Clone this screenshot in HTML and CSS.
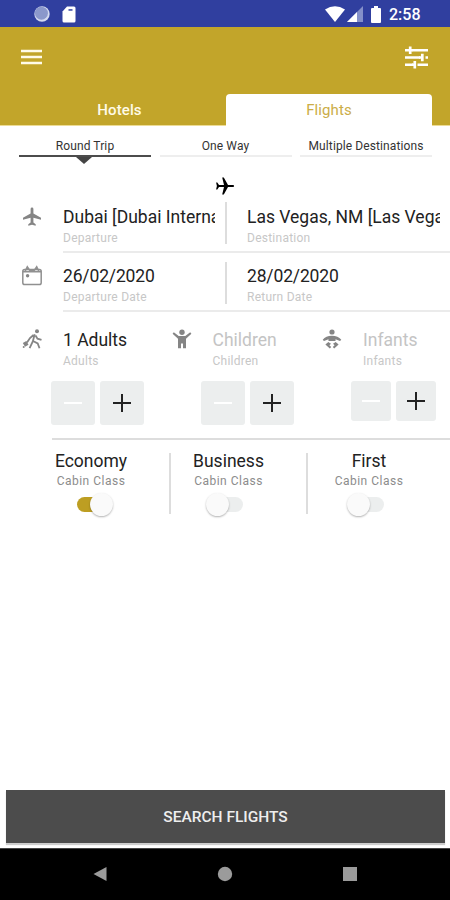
FILE: index.html
```html
<!DOCTYPE html>
<html lang="en">
<head>
<meta charset="utf-8">
<title>Flight search</title>
<link rel="stylesheet" href="styles.css">
</head>
<body>
<div class="screen">
  <div class="status">
    <svg class="status-dot" viewBox="0 0 16 16"><circle cx="8" cy="8" r="7.7" fill="#d4daf0"/><circle cx="7.4" cy="7.2" r="6.5" fill="#8b98cb"/></svg>
    <svg class="status-card" viewBox="0 0 14 17"><path d="M5 0.5h7a1.5 1.5 0 0 1 1.5 1.5v13a1.5 1.5 0 0 1-1.5 1.5H2A1.5 1.5 0 0 1 .5 15V5.5z" fill="#fff"/><path d="M6.5 3.2h4v1.5h-4z" fill="#303f9f"/></svg>
    <span class="grow"></span>
    <svg class="status-wifi" viewBox="0 0 20 16"><path d="M0 3.4Q10-3 20 3.4L10 16z" fill="#fff"/></svg>
    <svg class="status-signal" viewBox="0 0 16 16"><path d="M0 16L16 0v16z" fill="#8490c9"/><path d="M0 16L10 6v10z" fill="#fff"/></svg>
    <svg class="status-battery" viewBox="0 0 10 17"><path d="M3 0h4v2h2q1 0 1 1v13q0 1-1 1H1q-1 0-1-1V3q0-1 1-1h2z" fill="#fff"/></svg>
    <span class="clock">2:58</span>
  </div>

  <header class="appbar">
    <div class="toolbar">
      <svg class="menu" viewBox="0 0 21 16"><path d="M0 2h21M0 8h21M0 14h21" stroke="#fffbe8" stroke-width="2.4"/></svg>
      <svg class="tune" viewBox="0 0 23 23"><path d="M0 4.3h5M7.5 4.3H23M0 11.5h15M20.5 11.5H23M0 18.7h8M12.5 18.7H23" stroke="#fff" stroke-width="2.4"/><path d="M5.2 .6v7.4M17.3 7.8v7.4M9.8 15v7.4" stroke="#fff" stroke-width="2.7"/><path d="M5 4.3h3M14 11.5h4M7 18.7h3" stroke="#fff" stroke-width="2.4"/></svg>
    </div>
    <nav class="tabs">
      <span class="tab">Hotels</span>
      <span class="tab tab-active">Flights</span>
    </nav>
  </header>

  <nav class="trips">
    <span class="trip trip-active">Round Trip</span>
    <span class="trip">One Way</span>
    <span class="trip trip-multi">Multiple Destinations</span>
  </nav>

  <div class="swap"><svg viewBox="0 0 20 20"><path transform="rotate(90 10 10)" d="M18.5 12.8v-1.6L11.1 7V2a1.1 1.1 0 0 0-2.2 0v5l-7.4 4.2v1.6l7.4-1.8v5l-2.4 1.7v1.2l3.5-.8 3.5.8v-1.2l-2.4-1.7v-5z"/></svg></div>

  <section class="fields">
    <div class="lead"><svg viewBox="0 0 20 20"><path d="M19 12.7v-2L11.4 6.5V2a1.4 1.4 0 0 0-2.8 0v4.5L1 10.7v2l7.6-2v4.8l-2.3 1.7v1.6l3.7-1 3.7 1v-1.6l-2.3-1.7v-4.8z" fill="#858585"/></svg></div>
    <div class="pair">
      <div class="field"><div class="value">Dubai [Dubai Interna</div><div class="label">Departure</div></div>
      <div class="field field-second"><div class="value">Las Vegas, NM [Las Vega</div><div class="label">Destination</div></div>
    </div>
  </section>
  <section class="fields fields-dates">
    <div class="lead"><svg viewBox="0 0 20 20"><rect x=".8" y="3.5" width="18.4" height="15" rx="1.8" fill="none" stroke="#909090" stroke-width="1.5"/><path d="M1 5.7h18" stroke="#909090" stroke-width="1.6"/><path d="M3 5.5L5.3.8l2.5 3.6h4.4L14.7.8 17 5.5" fill="none" stroke="#909090" stroke-width="1.5"/><circle cx="5.6" cy="9.8" r="1.7" fill="#858585"/></svg></div>
    <div class="pair">
      <div class="field"><div class="value value-date">26/02/2020</div><div class="label">Departure Date</div></div>
      <div class="field field-second"><div class="value value-date">28/02/2020</div><div class="label">Return Date</div></div>
    </div>
  </section>

  <section class="guests">
    <div class="guest">
      <svg class="person" viewBox="0 0 20 20"><circle cx="15" cy="2.3" r="2" fill="#858585"/><path d="M12.7 5.2L10.8 12.5l-3.2 6.7M11 12l4.7 2.5 1.8 4.7M11.5 6L8 9l-3 4.5M13.5 6.5l2 3.2 4 1.2" fill="none" stroke="#858585" stroke-width="1.8"/><path d="M.8 14l3.5-2 2.2 3.7L3 17.8z" fill="#858585"/><circle cx="1.7" cy="18" r="1" fill="#858585"/></svg>
      <div class="count"><div class="value">1 Adults</div><div class="label">Adults</div></div>
      <div class="stepper"><span class="step"><i class="minus"></i></span><span class="step"><i class="plus"></i></span></div>
    </div>
    <div class="guest guest-off">
      <svg class="person" viewBox="0 0 20 20"><circle cx="10" cy="3.2" r="2.7" fill="#858585"/><path d="M1.8 3.2L.6 4.7 6 9.7v9.5h3V14.5h2v4.7h3V9.7l5.4-5-1.2-1.5L13.3 7H6.7z" fill="#858585"/></svg>
      <div class="count"><div class="value">Children</div><div class="label">Children</div></div>
      <div class="stepper"><span class="step"><i class="minus"></i></span><span class="step"><i class="plus"></i></span></div>
    </div>
    <div class="guest guest-off guest-small">
      <svg class="person" viewBox="0 0 20 20"><circle cx="10" cy="3" r="2.6" fill="#858585"/><path d="M.7 10.8Q4 6.7 10 6.8T19.3 10.8L18 12 13.5 10.3V12H6.5V10.3L2 12z" fill="#858585"/><path d="M6.3 13L3.4 15.6l4.4 3.9 1.4-1.4-1.8-1.9 1.6-1.5zM13.7 13l2.9 2.6-4.4 3.9-1.4-1.4 1.8-1.9-1.6-1.5z" fill="#858585"/></svg>
      <div class="count"><div class="value">Infants</div><div class="label">Infants</div></div>
      <div class="stepper"><span class="step"><i class="minus"></i></span><span class="step"><i class="plus"></i></span></div>
    </div>
  </section>

  <section class="cabins">
    <div class="cabin"><div class="cabin-name">Economy</div><div class="cabin-label">Cabin Class</div><div class="switch switch-on"><i class="thumb"></i></div></div>
    <div class="cabin"><div class="cabin-name">Business</div><div class="cabin-label">Cabin Class</div><div class="switch"><i class="thumb"></i></div></div>
    <div class="cabin"><div class="cabin-name">First</div><div class="cabin-label">Cabin Class</div><div class="switch"><i class="thumb"></i></div></div>
  </section>

  <div class="search">SEARCH FLIGHTS</div>
  <div class="android">
    <svg viewBox="0 0 14 14"><path d="M.5 7L13.5 0v14z"/></svg>
    <svg viewBox="0 0 14 14"><circle cx="7" cy="7" r="7.2"/></svg>
    <svg viewBox="0 0 14 14"><path d="M0 0h14v14H0z"/></svg>
  </div>
</div>
</body>
</html>
```
FILE: styles.css
```css
* { box-sizing: border-box; }
body { margin: 0; font-family: Roboto, "Liberation Sans", sans-serif; background: #fff; }
svg { display: block; overflow: visible; }
.screen { width: 450px; height: 900px; display: flex; flex-direction: column; overflow: hidden; }
.grow { flex: 1; }

.status { height: 27px; flex: none; background: #303f9f; display: flex; align-items: center; padding: 1px 30px 0 34px; }
.status-dot { width: 16px; height: 16px; margin-right: 12px; }
.status-card { width: 14px; height: 17px; }
.status-wifi { width: 20px; height: 16px; margin-right: 2px; }
.status-signal { width: 16px; height: 16px; margin-right: 8px; }
.status-battery { width: 10px; height: 17px; margin-right: 8px; }
.clock { color: #fff; font-size: 16px; font-weight: 500; line-height: 20px; width: 31px; white-space: nowrap; padding-top: 1px; }

.appbar { height: 98px; flex: none; background: #c2a52a; display: flex; flex-direction: column; box-shadow: 0 1px 0 #eddc95; }
.toolbar { height: 67px; display: flex; justify-content: space-between; align-items: center; padding: 0 22px 7px 21px; }
.menu { width: 21px; height: 16px; }
.tune { width: 23px; height: 23px; }
.tabs { height: 31px; display: grid; grid-template-columns: 206px 206px; padding-left: 20px; }
.tab { color: #fffbe8; font-size: 15px; font-weight: 500; letter-spacing: .1px; text-align: center; line-height: 33px; margin-right: 7px; }
.tab-active { height: 32px; margin-right: 0; background: #fff; color: #cbad48; border-radius: 4px 4px 0 0; font-weight: 400; }

.trips { height: 40px; flex: none; display: grid; grid-template-columns: 132px 132px 132px; column-gap: 8.5px; padding: 8px 0 0 19px; }
.trip { height: 24px; font-size: 12px; letter-spacing: .1px; line-height: 26px; text-align: center; color: #333; border-bottom: 2px solid #eee; position: relative; white-space: nowrap; }
.trip-active { border-bottom-color: #4c4c4c; }
.trip-active::after { content: ""; position: absolute; top: 24px; left: 57px; border: 8px solid transparent; border-top: 7px solid #444; border-bottom: 0; }
.trip-multi { letter-spacing: .1px; }

.swap { height: 37px; flex: none; display: flex; justify-content: center; padding-top: 11px; }
.swap svg { width: 20px; height: 20px; }

.fields { height: 60px; flex: none; display: grid; grid-template-columns: 63px 387px; }
.fields-dates { height: 59px; }
.lead { padding: 5px 0 0 22px; }
.fields-dates .lead { padding-top: 4px; }
.lead svg { width: 20px; height: 20px; }
.pair { display: grid; grid-template-columns: 162px 214px; border-bottom: 2px solid #ebebeb; height: 51px; }
.fields-dates .pair { height: 50px; }
.field { height: 42px; padding-top: 4px; }
.fields-dates .field { padding-top: 3px; }
.field .value { width: 152px; overflow: hidden; }
.field-second { border-left: 2px solid #ddd; padding-left: 20px; }
.field-second .value { width: 193px; }
.value { font-size: 17.5px; line-height: 22px; color: #222; white-space: nowrap; }
.field .value-date { letter-spacing: -.15px; }
.label { font-size: 12px; letter-spacing: .25px; line-height: 16px; margin-top: 2px; color: #c7c7c7; }

.guests { height: 117px; flex: none; display: grid; grid-template-columns: 149.5px 150.5px 150px; }
.guest { display: grid; grid-template-columns: 63px 1fr; grid-template-rows: 60px 1fr; }
.person { width: 20px; height: 20px; margin: 8px 0 0 22px; }
.count { padding-top: 8px; }
.guest-off .value { color: #c4c4c4; }
.stepper { grid-column: 1 / 3; display: flex; gap: 5px; padding-left: 51px; }
.step { width: 44px; height: 44px; border-radius: 3px; background: #eceeee; display: flex; align-items: center; justify-content: center; }
.guest-small .step { width: 40px; height: 40px; }
.minus { width: 18px; height: 2px; background: #fff; }
.plus { width: 18px; height: 18px; background: linear-gradient(#222, #222) 50% 50% / 18px 2px no-repeat, linear-gradient(#222, #222) 50% 50% / 2px 18px no-repeat; }

.cabins { height: 76px; flex: none; margin-left: 52px; border-top: 2px solid #ddd; display: grid; grid-template-columns: 119px 137px 122px; padding-top: 13px; }
.cabin { height: 61px; display: flex; flex-direction: column; align-items: center; border-right: 2px solid #ddd; }
.cabin:first-child { padding-right: 39px; }
.cabin:nth-child(2) { padding-right: 20px; }
.cabin:last-child { border: 0; }
.cabin-name { font-size: 17.5px; line-height: 20px; color: #222; margin-top: -2px; }
.cabin-label { font-size: 12px; letter-spacing: .5px; line-height: 16px; color: #8c8c8c; margin-top: 2px; }
.switch { width: 32px; height: 15px; border-radius: 8px; background: #eceeee; margin: 8px 0 0 -3px; display: flex; align-items: center; flex: none; }
.thumb { width: 23px; height: 23px; flex: none; border-radius: 50%; background: #fafafa; box-shadow: 0 1px 2px rgba(0,0,0,.3); margin-left: -5px; }
.switch-on { background: #bd9e22; justify-content: flex-end; margin-left: 4px; }
.switch-on .thumb { margin: 0 -4px 0 0; }

.search { height: 53px; flex: none; margin: auto 5px 5px 6px; background: #4c4c4c; color: #eee; font-size: 15.5px; font-weight: 500; text-align: center; line-height: 54px; box-shadow: 0 2px 1px #ccc; }
.android { height: 52px; flex: none; background: #000; display: grid; grid-template-columns: repeat(3, 14px); column-gap: 111px; justify-content: center; align-items: center; border-top: 1px solid #444; padding-bottom: 1px; }
.android svg { width: 14px; height: 14px; fill: #9b9b9b; }
```
